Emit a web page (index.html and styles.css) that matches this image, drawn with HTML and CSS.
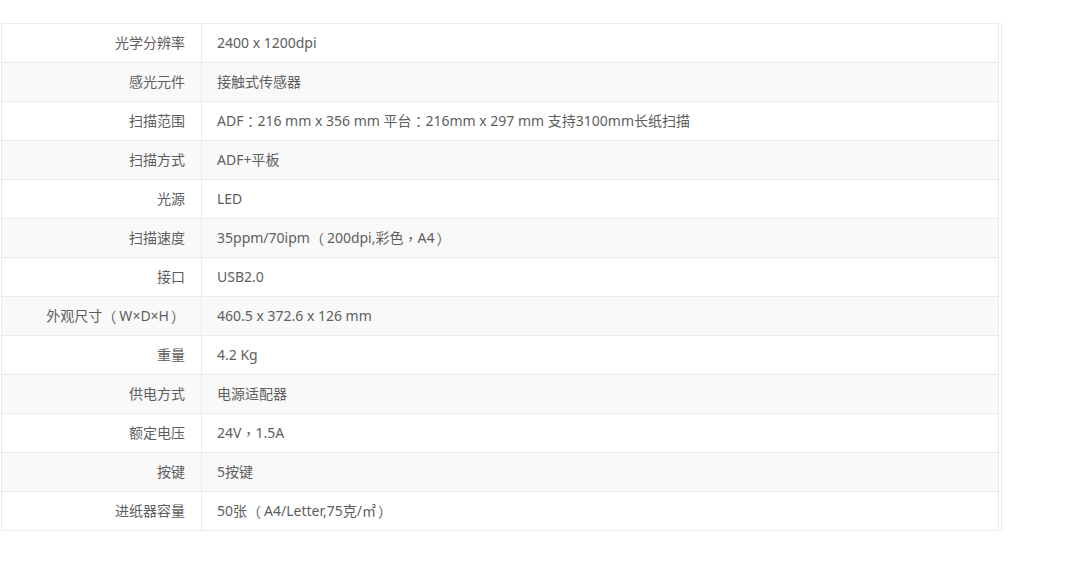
FILE: index.html
```html
<!DOCTYPE html>
<html lang="zh-CN">
<head>
<meta charset="utf-8">
<link rel="stylesheet" href="styles.css">
</head>
<body>
<div class="spec-wrap">
<table class="spec">
<colgroup><col class="c-label"><col class="c-value"></colgroup>
<tbody>
<tr><th><div class="cell">光学分辨率</div></th><td><div class="cell">2400 x 1200dpi</div></td></tr>
<tr><th><div class="cell">感光元件</div></th><td><div class="cell">接触式传感器</div></td></tr>
<tr><th><div class="cell">扫描范围</div></th><td><div class="cell">ADF<span class="fw">：</span>216 mm x 356 mm 平台<span class="fw">：</span>216mm x 297 mm 支持3100mm长纸扫描</div></td></tr>
<tr><th><div class="cell">扫描方式</div></th><td><div class="cell">ADF+平板</div></td></tr>
<tr><th><div class="cell">光源</div></th><td><div class="cell">LED</div></td></tr>
<tr><th><div class="cell">扫描速度</div></th><td><div class="cell">35ppm/70ipm<span class="fw po">（</span>200dpi,彩色<span class="fw">，</span>A4<span class="fw pc">）</span></div></td></tr>
<tr><th><div class="cell">接口</div></th><td><div class="cell">USB2.0</div></td></tr>
<tr><th><div class="cell">外观尺寸<span class="fw po">（</span>W×D×H<span class="fw pc">）</span></div></th><td><div class="cell">460.5 x 372.6 x 126 mm</div></td></tr>
<tr><th><div class="cell">重量</div></th><td><div class="cell">4.2 Kg</div></td></tr>
<tr><th><div class="cell">供电方式</div></th><td><div class="cell">电源适配器</div></td></tr>
<tr><th><div class="cell">额定电压</div></th><td><div class="cell">24V<span class="fw">，</span>1.5A</div></td></tr>
<tr><th><div class="cell">按键</div></th><td><div class="cell">5按键</div></td></tr>
<tr><th><div class="cell">进纸器容量</div></th><td><div class="cell">50张<span class="fw po">（</span>A4/Letter,75克/㎡<span class="fw pc">）</span></div></td></tr>
</tbody>
</table>
</div>
</body>
</html>
```
FILE: styles.css
```css
html, body { margin: 0; padding: 0; background: #fff; }
body {
  font-family: "Noto Sans", "Noto Sans CJK SC", sans-serif;
  font-size: 14px;
  color: #5e5e5e;
  text-spacing-trim: space-all;
}
.spec-wrap {
  margin: 23px 0 0 1px;
  width: 999px;
  padding-right: 1px;
  border-right: 1px solid #ebebeb;
  box-sizing: content-box;
}
.spec {
  width: 998px;
  border-collapse: collapse;
  table-layout: fixed;
}
.c-label { width: 200px; }
.spec th, .spec td {
  padding: 0;
  border: 1px solid #ebebeb;
  font-weight: normal;
  white-space: nowrap;
}
.cell {
  height: 38px;
  display: flex;
  align-items: center;
  overflow: hidden;
  line-height: 18px;
}
.spec th .cell { justify-content: flex-end; padding-right: 16px; }
.spec td .cell { justify-content: flex-start; padding-left: 15px; }
.spec tr:nth-child(even) th, .spec tr:nth-child(even) td { background: #f9f9f9; }
.fw { font-family: "Noto Sans CJK TC", sans-serif; }
.po { padding-right: 3px; }
.pc { padding-left: 2px; }
```
